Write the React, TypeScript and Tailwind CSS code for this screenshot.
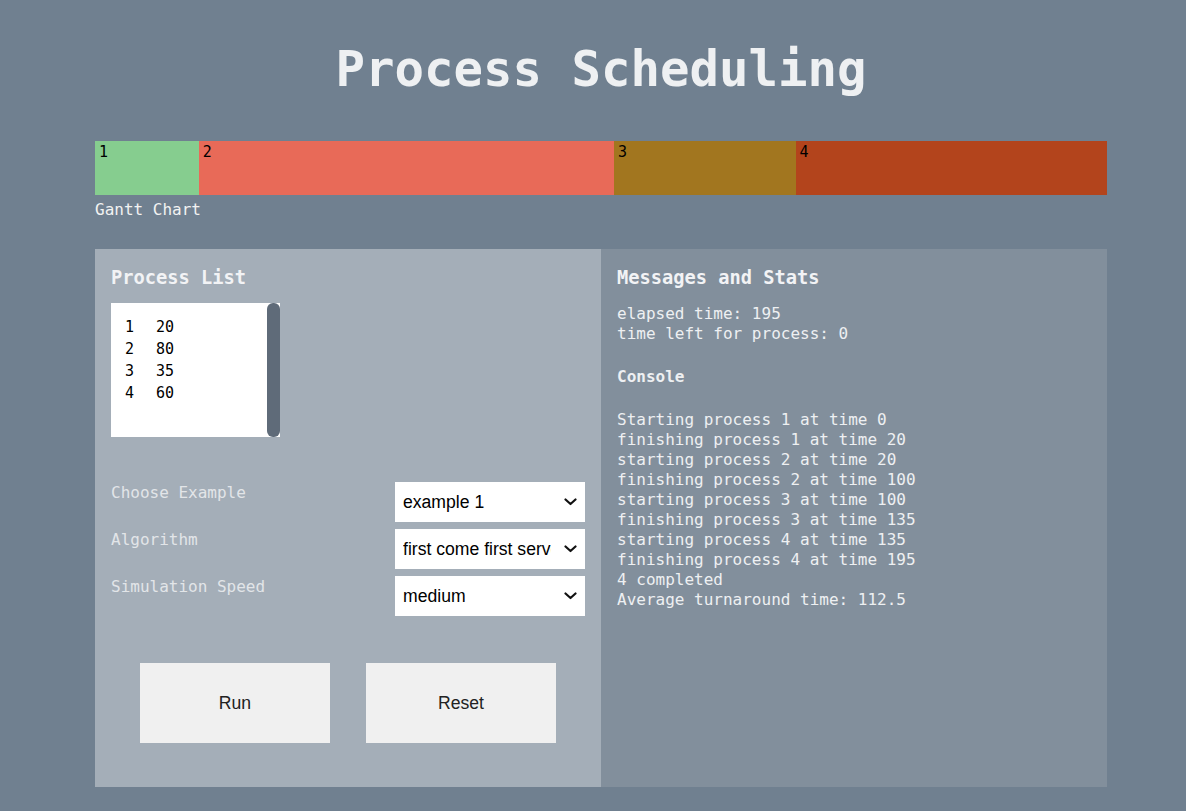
import React from "react";

const mono = { fontFamily: '"DejaVu Sans Mono", "Liberation Mono", monospace' };
const sans = { fontFamily: '"Liberation Sans", Arial, sans-serif' };

const segments = [
  { id: 1, burst: 20, color: "bg-[#86cd8f]" },
  { id: 2, burst: 80, color: "bg-[#e86a58]" },
  { id: 3, burst: 35, color: "bg-[#a2761f]" },
  { id: 4, burst: 60, color: "bg-[#b3441c]" },
];
const total = 195;

const consoleLines = [
  "Starting process 1 at time 0",
  "finishing process 1 at time 20",
  "starting process 2 at time 20",
  "finishing process 2 at time 100",
  "starting process 3 at time 100",
  "finishing process 3 at time 135",
  "starting process 4 at time 135",
  "finishing process 4 at time 195",
  "4 completed",
  "Average turnaround time: 112.5",
];

function Chevron() {
  return (
    <svg
      className="pointer-events-none absolute right-[8px] top-1/2 -translate-y-1/2"
      width="13"
      height="8"
      viewBox="0 0 13 8"
    >
      <path d="M1.5 1.5 L6.5 6 L11.5 1.5" fill="none" stroke="#111" strokeWidth="2.2" strokeLinecap="round" strokeLinejoin="round" />
    </svg>
  );
}

function Select({ value, options }: { value: string; options: string[] }) {
  return (
    <div className="relative w-[190px] h-[40px] bg-white">
      <select
        defaultValue={value}
        style={sans}
        className="appearance-none w-full h-full bg-white border-0 outline-none pl-[8px] pr-[34px] text-[17.6px] text-black"
      >
        {options.map((o) => (
          <option key={o} value={o}>
            {o}
          </option>
        ))}
      </select>
      <Chevron />
    </div>
  );
}

export default function App() {
  return (
    <div className="min-h-screen bg-[#708090] pl-4 text-[#eef0f2]" style={mono}>
      <div className="w-[1012px] mx-auto pt-[40px] pb-[24px]">
        <h1 className="h-[60px] leading-[60px] text-center text-[49px] font-bold text-[#eef0f2]">
          Process Scheduling
        </h1>

        <div className="mt-[41px] flex h-[54px] w-full">
          {segments.map((s) => (
            <div
              key={s.id}
              className={`${s.color} h-full text-black text-[15px] leading-[20px] pl-[4px] pt-[1px]`}
              style={{ width: `${(s.burst / total) * 100}%` }}
            >
              {s.id}
            </div>
          ))}
        </div>
        <div className="mt-[5px] text-[16px] leading-[20px] text-[#f2f2f2]">Gantt Chart</div>

        <div className="mt-[29px] flex">
          <div className="w-[506px] bg-[#a4aeb8] px-4 pt-[17px] pb-[44px]">
            <h3 className="text-[18.7px] leading-[24px] font-bold text-[#f2f3f5]">Process List</h3>
            <div className="relative mt-[13px] w-[169px] h-[134px] bg-white pl-[14px] pt-[13px] text-[15px] leading-[22px] text-black">
              {[
                ["1", "20"],
                ["2", "80"],
                ["3", "35"],
                ["4", "60"],
              ].map(([a, b]) => (
                <div key={a} className="flex">
                  <span className="w-[31px]">{a}</span>
                  <span>{b}</span>
                </div>
              ))}
              <div className="absolute right-0 top-0 w-[13px] h-[134px] rounded-[6px] bg-[#5f6b79]" />
            </div>

            <div className="mt-[45px] flex flex-col gap-[7px]">
              {[
                ["Choose Example", "example 1", ["example 1", "example 2", "example 3"]],
                ["Algorithm", "first come first served", ["first come first served", "shortest job first", "round robin"]],
                ["Simulation Speed", "medium", ["slow", "medium", "fast"]],
              ].map(([label, value, opts]) => (
                <div key={label as string} className="flex justify-between items-start h-[40px]">
                  <span className="pt-[1px] text-[16px] leading-[20px] text-[#e2e5e8]">{label as string}</span>
                  <Select value={value as string} options={opts as string[]} />
                </div>
              ))}
            </div>

            <div className="mt-[47px] flex justify-center gap-[36px]">
              <button style={sans} className="w-[190px] h-[80px] bg-[#f0f0f0] text-[17.6px] text-[#222]">
                Run
              </button>
              <button style={sans} className="w-[190px] h-[80px] bg-[#f0f0f0] text-[17.6px] text-[#222]">
                Reset
              </button>
            </div>
          </div>

          <div className="w-[506px] bg-[#828f9c] px-4 pt-[17px]">
            <h3 className="text-[18.7px] leading-[24px] font-bold text-[#f2f3f5]">Messages and Stats</h3>
            <div className="mt-[14px] text-[16px] leading-[20px]">
              <div>elapsed time: 195</div>
              <div>time left for process: 0</div>
            </div>
            <div className="mt-[23px] text-[16px] leading-[20px] font-bold">Console</div>
            <div className="mt-[23px] text-[16px] leading-[20px]">
              {consoleLines.map((l) => (
                <div key={l}>{l}</div>
              ))}
            </div>
          </div>
        </div>
      </div>
    </div>
  );
}
